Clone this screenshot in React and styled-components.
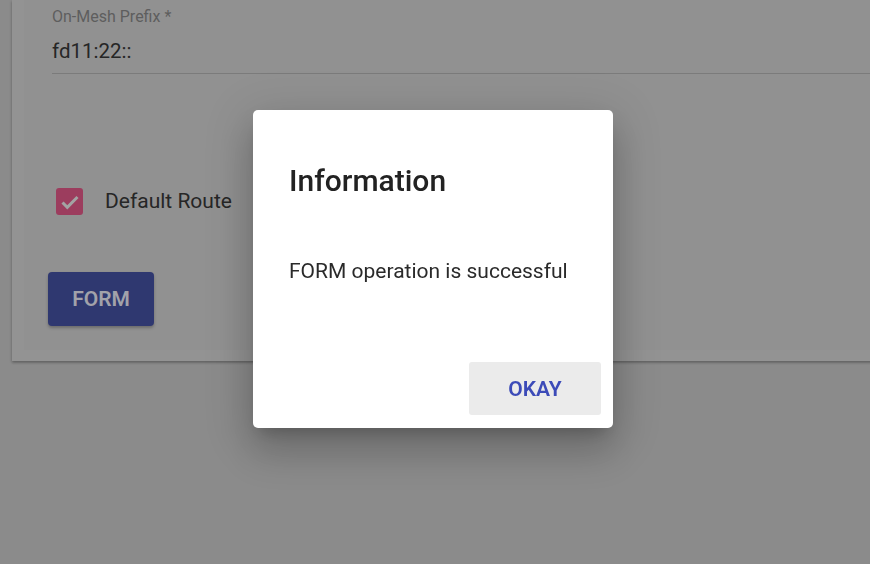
import React from "react";
import styled, { createGlobalStyle } from "styled-components";

const Global = createGlobalStyle`
  html, body { margin: 0; padding: 0; }
  body {
    background: #8b8b8b;
    font-family: Roboto, "Liberation Sans", sans-serif;
    width: 870px;
    height: 564px;
    overflow: hidden;
  }
`;

const Page = styled.div`
  width: 870px;
  height: 564px;
  padding-left: 12px;
  box-sizing: border-box;
`;

const Card = styled.div`
  width: 900px;
  height: 361px;
  background: #939393;
  box-shadow: 0 1px 3px rgba(0, 0, 0, 0.22), 0 2px 2px rgba(0, 0, 0, 0.14);
  padding-left: 12px;
  box-sizing: border-box;
`;

const FormArea = styled.div`
  height: 350px;
  background: #919191;
  padding: 7px 0 0 28px;
  box-sizing: border-box;
  display: flex;
  flex-direction: column;
`;

const Field = styled.div`
  display: flex;
  flex-direction: column;
  border-bottom: 1px solid #7b7b7b;
`;

const Label = styled.label`
  font-size: 16px;
  color: #5e5e5e;
  line-height: 19px;
`;

const InputText = styled.div`
  font-size: 20.5px;
  color: #262626;
  line-height: 24px;
  padding: 13px 0 10px;
`;

const CheckRow = styled.div`
  display: flex;
  align-items: center;
  margin-top: 114px;
  padding-left: 4px;
  gap: 22px;
`;

const Box = styled.span`
  width: 27px;
  height: 27px;
  border-radius: 3px;
  background: #9c3d5e;
  display: flex;
  align-items: center;
  justify-content: center;
`;

const CheckLabel = styled.span`
  font-size: 21px;
  color: #262626;
  margin-top: -2px;
`;

const FormButton = styled.button`
  margin-top: 57px;
  margin-left: -4px;
  width: 106px;
  height: 54px;
  border: none;
  border-radius: 4px;
  background: #2f3870;
  color: #a2a2aa;
  font-family: inherit;
  font-size: 21px;
  font-weight: 600;
  box-shadow: 0 2px 3px rgba(0, 0, 0, 0.25);
`;

const Backdrop = styled.div`
  position: fixed;
  inset: 0;
  display: flex;
  justify-content: center;
  align-items: flex-start;
  padding: 110px 4px 0 0;
`;

const Dialog = styled.div`
  width: 360px;
  height: 318px;
  background: #ffffff;
  border-radius: 5px;
  box-shadow: 0 11px 15px -7px rgba(0, 0, 0, 0.2), 0 24px 38px 3px rgba(0, 0, 0, 0.14),
    0 9px 46px 8px rgba(0, 0, 0, 0.12);
  display: flex;
  flex-direction: column;
  box-sizing: border-box;
`;

const Title = styled.h2`
  margin: 0;
  padding: 53px 36px 0;
  font-size: 30px;
  font-weight: 500;
  color: #222222;
  line-height: 36px;
`;

const Body = styled.p`
  margin: 0;
  padding: 60px 36px 0;
  font-size: 21px;
  color: #2a2a2a;
  line-height: 24px;
  flex: 1;
`;

const Actions = styled.div`
  display: flex;
  justify-content: flex-end;
  padding: 0 12px 13px;
`;

const OkButton = styled.button`
  width: 132px;
  height: 53px;
  border: none;
  border-radius: 3px;
  background: #ebebeb;
  color: #3c4bb8;
  font-family: inherit;
  font-size: 21px;
  font-weight: 600;
`;

export default function App() {
  return (
    <>
      <Global />
      <Page>
        <Card>
          <FormArea>
            <Field>
              <Label>On-Mesh Prefix *</Label>
              <InputText>fd11:22::</InputText>
            </Field>
            <CheckRow>
              <Box>
                <svg width="24" height="24" viewBox="0 0 24 24">
                  <path d="M4.5 12.5l4.8 4.8L19.5 7" fill="none" stroke="#a3a3a3" strokeWidth="3" />
                </svg>
              </Box>
              <CheckLabel>Default Route</CheckLabel>
            </CheckRow>
            <div>
              <FormButton>FORM</FormButton>
            </div>
          </FormArea>
        </Card>
      </Page>
      <Backdrop>
        <Dialog role="dialog">
          <Title>Information</Title>
          <Body>FORM operation is successful</Body>
          <Actions>
            <OkButton>OKAY</OkButton>
          </Actions>
        </Dialog>
      </Backdrop>
    </>
  );
}
